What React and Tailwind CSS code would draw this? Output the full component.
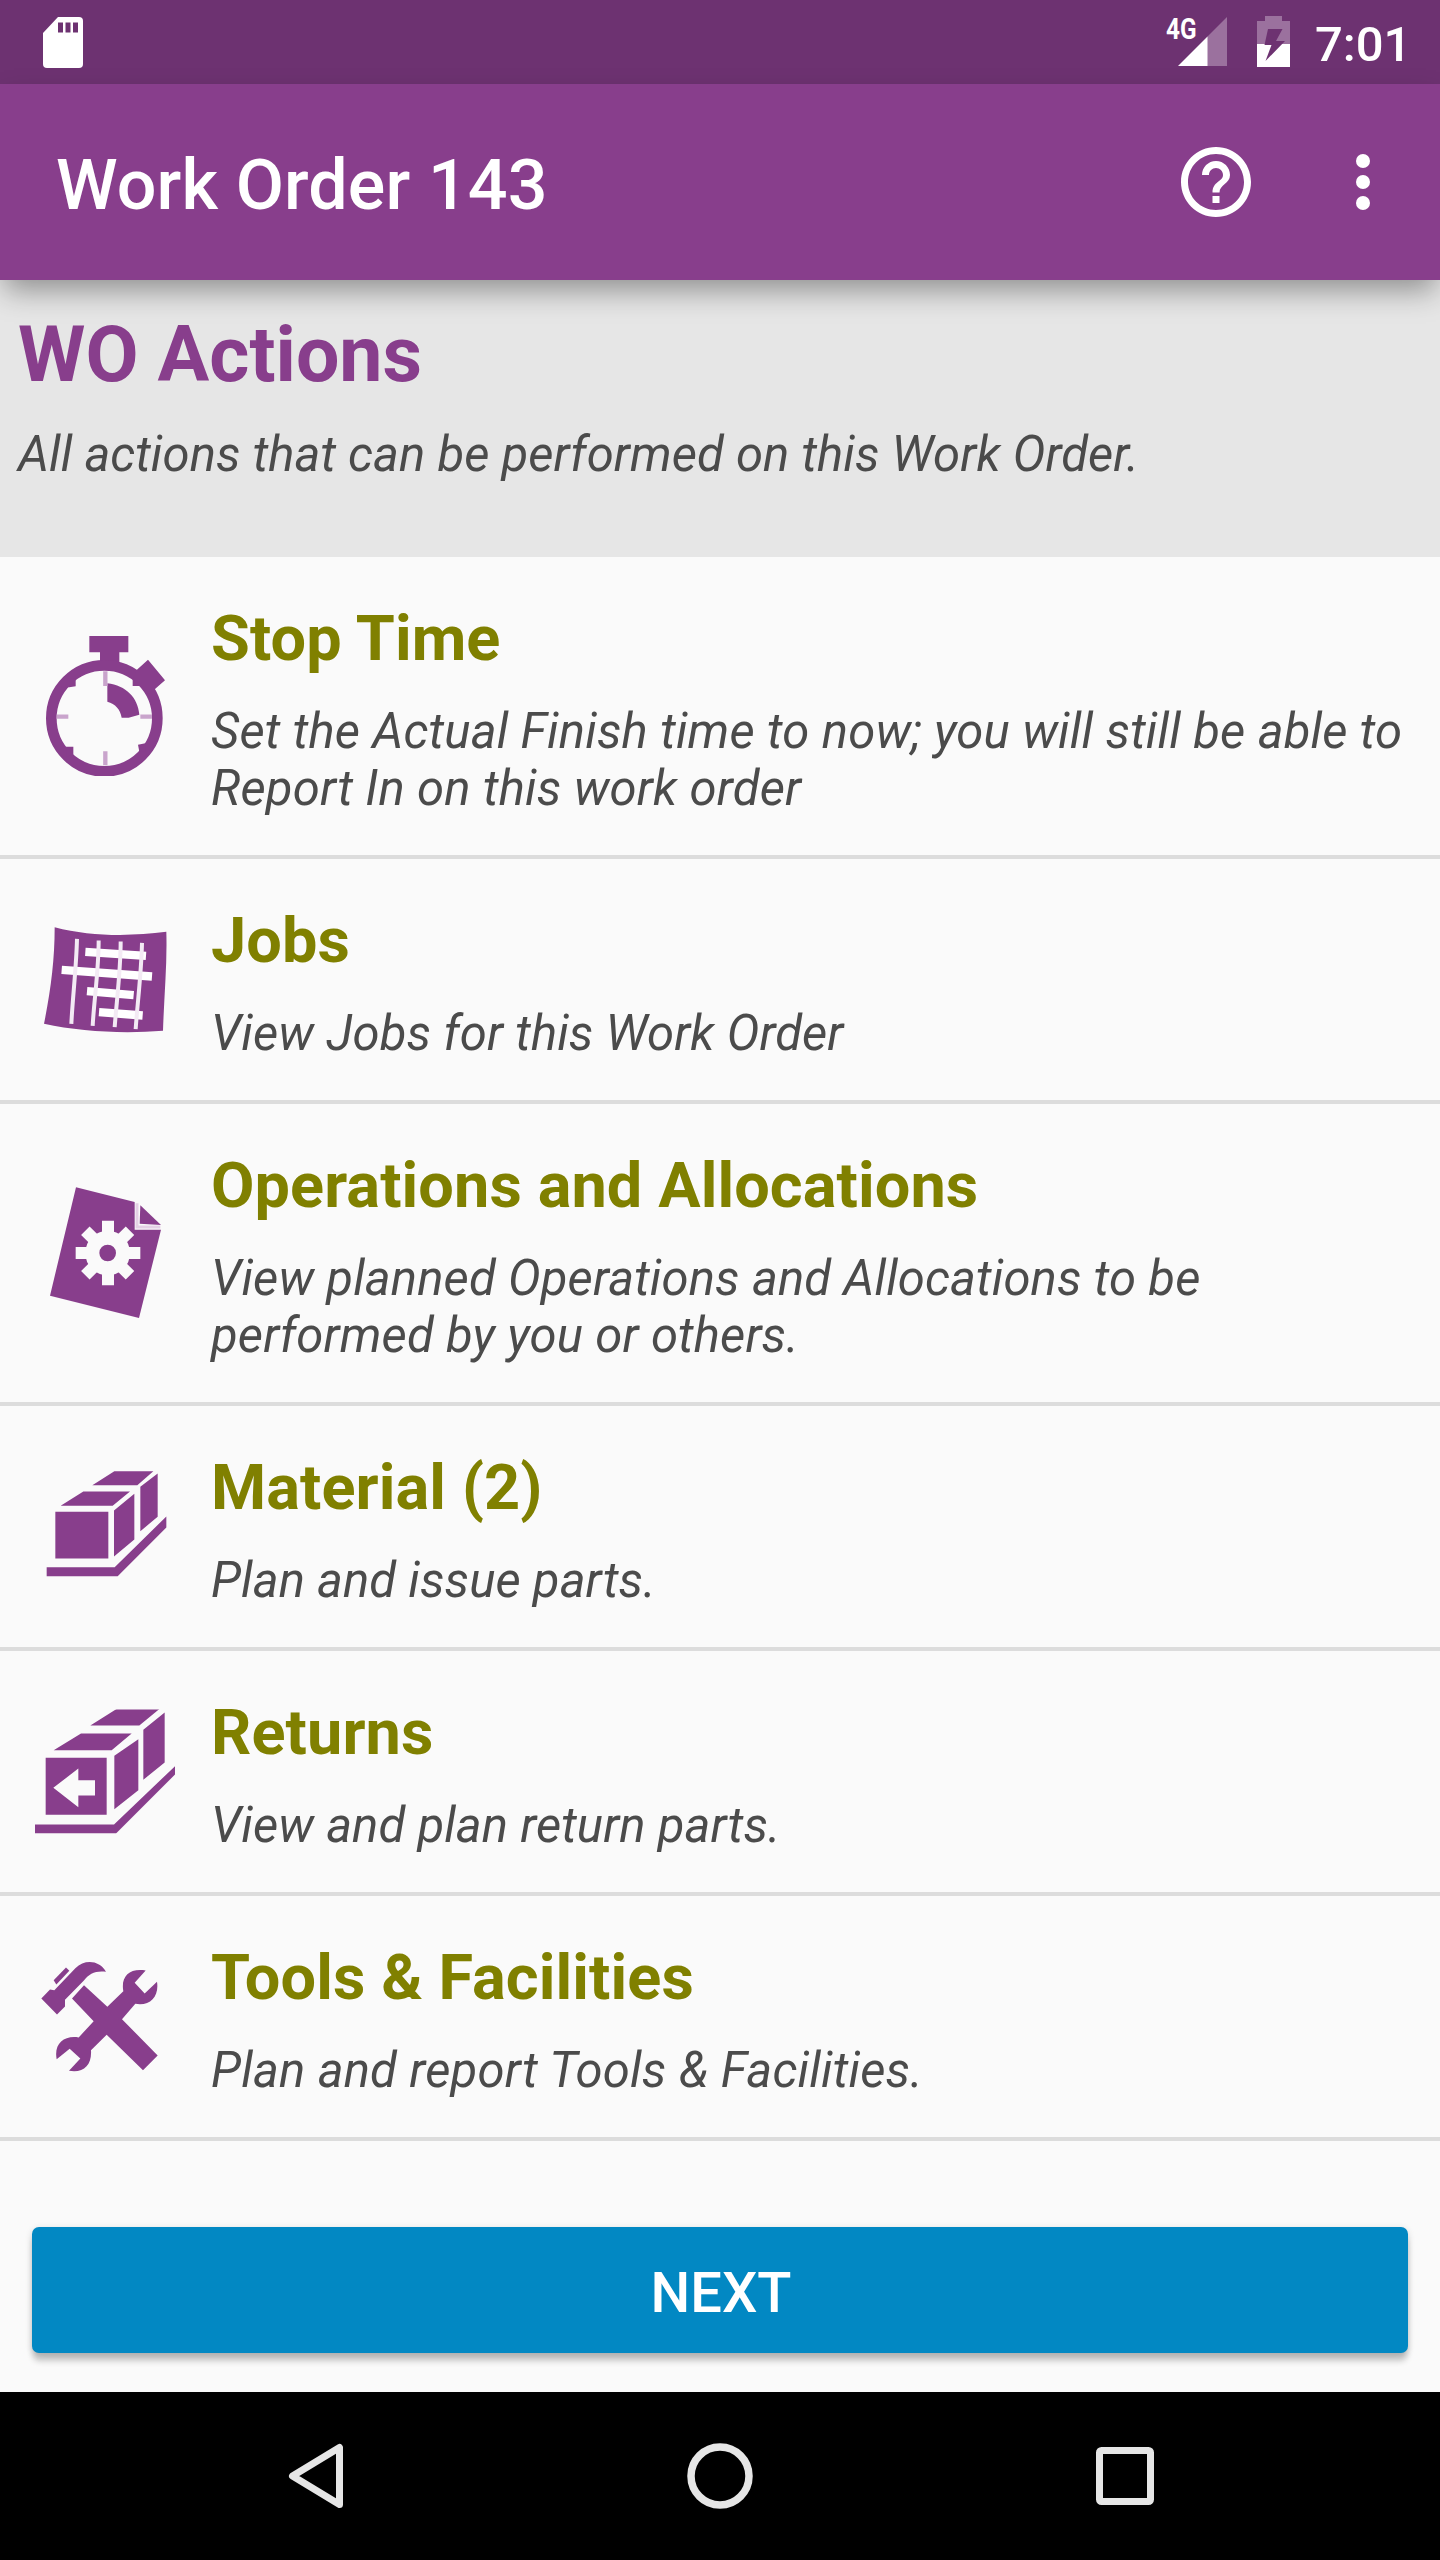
const P = "#883e8c";

function Icon({ y, children }) {
  return (
    <svg className="ml-[35px] size-[140px] shrink-0" viewBox={`45 ${y} 420 420`} fill={P}>
      {children}
    </svg>
  );
}

function Stopwatch() {
  return (
    <Icon y={78}>
      <path d="M208 76H325V127H298V160H240V127H208Z" />
      <circle cx="253" cy="325" r="159" fill="none" stroke={P} strokeWidth="32" />
      <path d="M384 149L435 211L405 237L385 252L362 228H338V210L350 180Z" />
      <path d="M262 220C318 226 354 264 358 314L326 323H305C301 298 286 281 262 275Z" />
      <path d="M148 232L167 229V205L140 205L122 232ZM138 410H160V434L140 440ZM376 400L354 404L358 425L376 425Z" />
      <path d="M256 184V228M256 424V466M110 320H145M361 320H396" stroke="#c9a4cc" strokeWidth="13" />
    </Icon>
  );
}

function Jobs() {
  return (
    <Icon y={28.5}>
      <path d="M104 80C210 108 330 108 439 94C442 190 432 290 429 391C310 400 180 394 72 370C92 270 104 180 104 80Z" />
      <g stroke="#fff" fill="none">
        <path d="M196 154L378 166M125 208L396 228M201 272L341 284M237 335L368 345" strokeWidth="25" />
        <path d="M171 115C169 200 158 290 154 370M236 120C236 210 222 300 218 376M302 123C302 210 290 300 284 380M366 127C364 220 352 310 347 386" strokeWidth="12" stroke="#f3eaf4" />
      </g>
    </Icon>
  );
}

function Operations() {
  return (
    <Icon y={69}>
      <path d="M168 82L344 126V209L423 209L357 474L90 407Z" />
      <path d="M361 136L423 195L359 191Z" />
      <path d="M351 130V201H421" fill="none" stroke="#e4d0e5" strokeWidth="9" />
      <circle cx="263" cy="279" r="46" fill="none" stroke="#fafafa" strokeWidth="42" />
      <path d="M264 182V228M264 330V376M167 279H213M313 279H361M196 212L228 244M298 314L330 346M330 212L298 244M228 314L196 346" stroke="#fafafa" strokeWidth="36" />
    </Icon>
  );
}

function Material() {
  return (
    <Icon y={49.5}>
      <path d="M106 214H265V354H106ZM122 196L190 153H330L278 196ZM282 210L343 160V297L282 348ZM217 134L283 92H400L352 134ZM361 139L413 99V229L361 272Z" />
      <path d="M80 380H284L439 228V261L293 407H80Z" />
    </Icon>
  );
}

function Returns() {
  return (
    <Icon y={34.5}>
      <svg x="45" y="57" width="420" height="372" viewBox="45 57 420 372">
        <path d="M77 202H260V373H77ZM101 179L183 129H335L275 179ZM283 196L355 146V299L283 356ZM211 105L292 54H420L358 105ZM370 118L434 66V216L370 268Z" />
        <path d="M45 402H282L465 227V252L288 429H45Z" />
        <path d="M100 292L175 234V269H225V315H175V350Z" fill="#fafafa" />
      </svg>
    </Icon>
  );
}

function Tools() {
  return (
    <Icon y={19.5}>
      <path d="M192 134L262 199L310 152C302 108 328 82 377 90L344 127L374 159L411 124C418 168 390 198 346 190L306 236L413 345L369 389L260 283L213 329C216 374 190 399 147 391L181 354L149 325L110 356C101 310 132 284 176 291L221 242L156 174Z" />
      <path d="M64 174L90 147L103 149L166 83C195 55 239 60 258 94C228 90 207 99 191 121L135 178V198L111 222Z" />
      <path d="M138 81L148 91L109 132L101 119Z" />
    </Icon>
  );
}

const items = [
  {
    Glyph: Stopwatch,
    title: "Stop Time",
    tracking: "tracking-[0.17px]",
    lines: ["Set the Actual Finish time to now; you will still be able to", "Report In on this work order"],
  },
  { Glyph: Jobs, title: "Jobs", tracking: "tracking-[0.08px]", lines: ["View Jobs for this Work Order"] },
  {
    Glyph: Operations,
    title: "Operations and Allocations",
    tracking: "tracking-[0.12px]",
    lines: ["View planned Operations and Allocations to be", "performed by you or others."],
  },
  { Glyph: Material, title: "Material (2)", tracking: "tracking-[0.08px]", lines: ["Plan and issue parts."] },
  { Glyph: Returns, title: "Returns", tracking: "tracking-[0.08px]", lines: ["View and plan return parts."] },
  { Glyph: Tools, title: "Tools & Facilities", tracking: "tracking-[0.19px]", lines: ["Plan and report Tools & Facilities."] },
];

function StatusBar() {
  return (
    <div className="flex h-[84px] items-start justify-between bg-[#6d3271] text-white">
      <svg className="mt-[17px] ml-[43px] h-[51px] w-10" viewBox="0 0 40 51">
        <path fill="#fff" d="M15 0H36a4 4 0 0 1 4 4V47a4 4 0 0 1-4 4H4a4 4 0 0 1-4-4V16Z" />
        <path fill="#6d3271" d="M15 5.500h5v10h-5zM22.500 5.500h5v10h-5zM30 5.500h5v10h-5z" />
      </svg>
      <div className="flex items-start">
        <span className="mt-[15px] w-[30px] origin-left scale-x-[0.84] text-[29px] leading-[28px] font-bold">4G</span>
        <svg className="mt-[17px] -ml-[18px] h-[49px] w-[49px]" viewBox="0 0 49 49">
          <path fill="#9b719e" d="M49 0V49H29V20Z" />
          <path fill="#fff" d="M0 49L29.500 19.500V49Z" />
        </svg>
        <svg className="mt-4 ml-[30px] h-[51px] w-[33px]" viewBox="0 0 33 51">
          <path fill="#9b719e" d="M8 0H25V5H33V28H0V5H8Z" />
          <path fill="#fff" d="M0 28H33V51H0Z" />
          <path fill="#6d3271" d="M11 13H25.500L19 25H28L8.500 45L14.500 29H7.500Z" />
        </svg>
        <span className="mt-4 mr-8 ml-[25px] w-[93px] text-[49px] leading-[57px] font-medium">7:01</span>
      </div>
    </div>
  );
}

function AppBar() {
  return (
    <div className="relative z-10 flex h-[196px] items-center bg-[#883e8c] pl-14 text-white shadow-[0_14px_28px_-4px_rgba(0,0,0,0.38)]">
      <h1 className="grow pt-[5px] text-[70px] leading-[82px] font-medium tracking-[0.14px]">Work Order 143</h1>
      <svg className="size-[84px]" viewBox="0 0 24 24" fill="#fff">
        <path d="M11 18h2v-2h-2v2zm1-16C6.480 2 2 6.480 2 12s4.480 10 10 10 10-4.480 10-10S17.520 2 12 2zm0 18c-4.410 0-8-3.590-8-8s3.590-8 8-8 8 3.590 8 8-3.590 8-8 8zm0-14c-2.210 0-4 1.790-4 4h2c0-1.100.9-2 2-2s2 .9 2 2c0 2-3 1.750-3 5h2c0-2.250 3-2.500 3-5 0-2.210-1.790-4-4-4z" />
      </svg>
      <svg className="mr-[35px] ml-[63px] size-[84px]" viewBox="0 0 84 84" fill="#fff">
        <circle cx="42" cy="21" r="7" />
        <circle cx="42" cy="42" r="7" />
        <circle cx="42" cy="63" r="7" />
      </svg>
    </div>
  );
}

export default function App() {
  return (
    <div className="flex h-[2560px] w-[1440px] flex-col overflow-hidden bg-[#fafafa] font-[Roboto,sans-serif] text-[#4b4b4b]">
      <StatusBar />
      <AppBar />
      <header className="h-[277px] bg-[#e6e6e6] px-[18px] pt-[30px]">
        <h2 className="text-[77px] leading-[90px] font-bold text-[#883e8c]">WO Actions</h2>
        <p className="mt-[26px] text-[49px] leading-[57px] tracking-[0.06px] italic">
          All actions that can be performed on this Work Order.
        </p>
      </header>
      <ul>
        {items.map(({ Glyph, title, tracking, lines }) => (
          <li key={title} className="flex items-center border-b-4 border-[#dcdcdc]">
            <Glyph />
            <div className="ml-[36px] pt-[45px] pb-[38px]">
              <h3 className="text-[63px] leading-[74px] font-bold tracking-[0.1px] text-[#808000]">{title}</h3>
              <p className={`mt-[27px] text-[49px] leading-[57px] whitespace-nowrap italic ${tracking}`}>
                {lines.map((line) => (
                  <span key={line} className="block">{line}</span>
                ))}
              </p>
            </div>
          </li>
        ))}
      </ul>
      <button className="mx-8 mt-auto mb-[39px] h-[126px] shrink-0 rounded-[7px] bg-[#0288c3] pt-[5px] pl-[2px] text-[56px] leading-[66px] font-medium text-white shadow-[0_9px_6px_-1px_rgba(0,0,0,0.2),0_2px_7px_rgba(0,0,0,0.16)]">
        NEXT
      </button>
      <nav className="flex h-[168px] shrink-0 items-center bg-black pl-[288px]">
        <svg className="h-[66px] w-[56px]" viewBox="0 0 56 66" fill="none" stroke="#e6e6e6" strokeWidth="7" strokeLinejoin="round">
          <path d="M51.500 4.500V61.500L4.500 33Z" />
        </svg>
        <svg className="ml-[343px] size-[66px]" viewBox="0 0 66 66" fill="none" stroke="#e6e6e6" strokeWidth="7.500">
          <circle cx="33" cy="33" r="29" />
        </svg>
        <svg className="ml-[343px] size-[58px]" viewBox="0 0 58 58" fill="none" stroke="#e6e6e6" strokeWidth="7">
          <rect x="3.500" y="3.500" width="51" height="51" rx="2" />
        </svg>
      </nav>
    </div>
  );
}
